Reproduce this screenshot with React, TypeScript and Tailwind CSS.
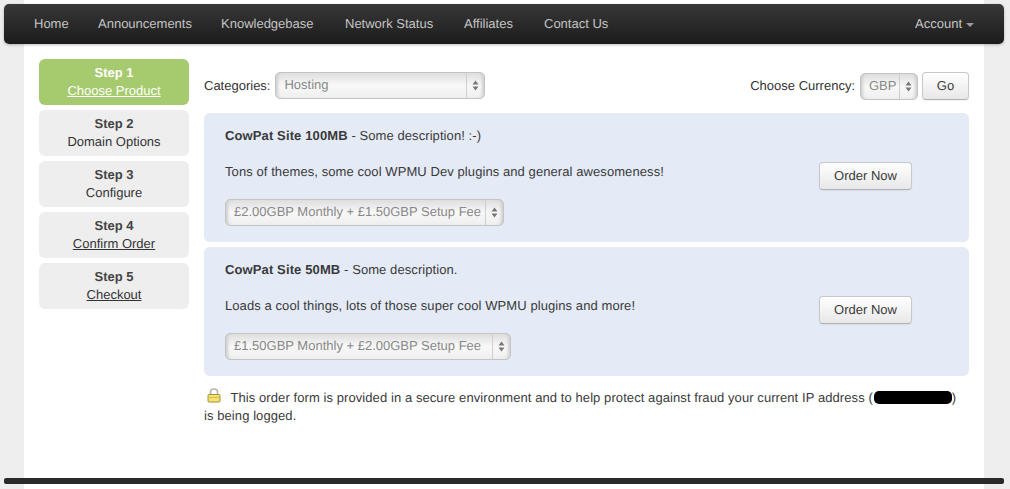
import React from "react";

function Arrows() {
  return (
    <svg width="7" height="11" viewBox="0 0 7 11" className="block">
      <path d="M3.5 0.5L6.5 4.5H0.5Z" fill="#777" />
      <path d="M3.5 10.5L6.5 6.5H0.5Z" fill="#777" />
    </svg>
  );
}

function Sel({ text, className }: { text: string; className: string }) {
  return (
    <div className={"flex h-[27px] items-stretch rounded-[5px] border border-[#c4c4c4] bg-gradient-to-b from-[#dedede] via-[#f8f8f8] to-[#efefef] shadow-[inset_4px_0_3px_-2px_#cfcfcf,inset_-4px_0_3px_-2px_#cfcfcf] " + className}>
      <div className="flex min-w-0 flex-1 items-center whitespace-nowrap pb-[1px] pl-[8px] text-[#888]">{text}</div>
      <div className="flex w-[18px] shrink-0 items-center justify-center border-l border-[#cfcfcf]">
        <Arrows />
      </div>
    </div>
  );
}

function Btn({ label, className }: { label: string; className: string }) {
  return (
    <div className={"flex items-center justify-center rounded-[4px] border border-[#c8c8c8] border-b-[#b0b0b0] bg-gradient-to-b from-white to-[#e8e8e8] text-[#3a3a3a] shadow-[0_1px_2px_rgba(0,0,0,0.06)] " + className}>
      {label}
    </div>
  );
}

function Step({ n, label, link, active }: { n: number; label: string; link?: boolean; active?: boolean }) {
  return (
    <div className={"flex h-[46px] flex-col items-center justify-center rounded-[6px] text-center leading-[18px] " + (active ? "bg-[#a6ca6e] text-white" : "bg-[#eeeeee] text-[#333]")}>
      <div className={"font-bold " + (active ? "" : "text-[#444]")}>Step {n}</div>
      <div className={link ? "underline" : ""}>{label}</div>
    </div>
  );
}

function Product({ title, desc, body, price, selW }: { title: string; desc: string; body: string; price: string; selW: string }) {
  return (
    <div className="flex h-[129px] rounded-[6px] bg-[#e4eaf6] pl-[21px] pr-[57px]">
      <div className="flex-1 pt-[14px]">
        <div className="h-[18px] leading-[18px] tracking-[0.08px] text-[#3a3a3a]">
          <span className="font-bold tracking-[0.12px]">{title}</span> - {desc}
        </div>
        <div className="mt-[18px] h-[18px] leading-[18px] tracking-[0.08px] text-[#3a3a3a]">{body}</div>
        <Sel text={price} className={"mt-[18px] " + selW} />
      </div>
      <Btn label="Order Now" className="mt-[49px] h-[28px] w-[93px]" />
    </div>
  );
}

export default function App() {
  const nav = [
    ["Home", "w-[64px]"],
    ["Announcements", "w-[123px]"],
    ["Knowledgebase", "w-[124px]"],
    ["Network Status", "w-[119px]"],
    ["Affiliates", "w-[80px]"],
    ["Contact Us", "w-[70px]"],
  ];
  return (
    <div className="min-h-[489px] bg-[#eeeeee] font-['Liberation_Sans',Arial,sans-serif] text-[13px] text-[#333] [text-rendering:geometricPrecision]">
      <div className="ml-[24px] flex h-[489px] w-[960px] flex-col bg-white">
        <div className="mx-[-20px] mt-[4px] flex h-[40px] shrink-0 items-center justify-between rounded-[5px] bg-gradient-to-b from-[#383838] to-[#1c1c1c] px-[15px] text-[#c4c4c4] shadow-[0_1px_3px_rgba(0,0,0,0.25)]">
          <div className="flex pl-[15px]">
            {nav.map(([n, w]) => (
              <span key={n} className={"whitespace-nowrap " + w}>{n}</span>
            ))}
          </div>
          <div className="flex items-center gap-[4px] pr-[15px]">
            <span>Account</span>
            <svg width="8" height="4" viewBox="0 0 8 4" className="mt-[1px]">
              <path d="M0 0H8L4 4Z" fill="#999" />
            </svg>
          </div>
        </div>

        <div className="flex flex-1 gap-[15px] px-[15px] pt-[15px]">
          <div className="flex w-[150px] shrink-0 flex-col gap-[5px]">
            <Step n={1} label="Choose Product" link active />
            <Step n={2} label="Domain Options" />
            <Step n={3} label="Configure" />
            <Step n={4} label="Confirm Order" link />
            <Step n={5} label="Checkout" link />
          </div>

          <div className="min-w-0 flex-1">
            <div className="flex h-[54px] items-start justify-between pt-[13px]">
              <div className="flex items-center gap-[5px]">
                <span>Categories:</span>
                <Sel text="Hosting" className="w-[210px]" />
              </div>
              <div className="flex items-center">
                <span className="mr-[5px]">Choose Currency:</span>
                <Sel text="GBP" className="w-[58px]" />
                <Btn label="Go" className="ml-[4px] h-[28px] w-[47px]" />
              </div>
            </div>

            <div className="flex flex-col gap-[5px]">
              <Product title="CowPat Site 100MB" desc="Some description! :-)" body="Tons of themes, some cool WPMU Dev plugins and general awesomeness!" price="£2.00GBP Monthly + £1.50GBP Setup Fee" selW="w-[279px]" />
              <Product title="CowPat Site 50MB" desc="Some description." body="Loads a cool things, lots of those super cool WPMU plugins and more!" price="£1.50GBP Monthly + £2.00GBP Setup Fee" selW="w-[286px]" />
            </div>

            <p className="mt-[12px] leading-[18px] tracking-[0.08px] text-[#3a3a3a]">
              <svg width="14" height="15" viewBox="0 0 14 15" className="ml-[3px] mr-[6px] inline-block align-[-1px]">
                <path d="M3.5 7V4a3.5 3 0 0 1 7 0v3" fill="none" stroke="#b4b4ac" strokeWidth="1.6" />
                <rect x="1" y="6.5" width="12" height="7.5" rx="1" fill="#f3e27a" stroke="#a8922c" />
                <rect x="2" y="9" width="10" height="1" fill="#dcc040" />
              </svg>{" "}
              This order form is provided in a secure environment and to help protect against fraud your current IP address (
              <span className="relative inline-block w-[79px]">
                <span className="absolute left-[1px] top-[2px] h-[13px] w-[78px] rounded-[5px] bg-black" />
                &nbsp;
              </span>
              ) is being logged.
            </p>
          </div>
        </div>

        <div className="mx-[-20px] mb-[5px] h-[6px] shrink-0 rounded-[2px] bg-[#2a2a2a]" />
      </div>
    </div>
  );
}
